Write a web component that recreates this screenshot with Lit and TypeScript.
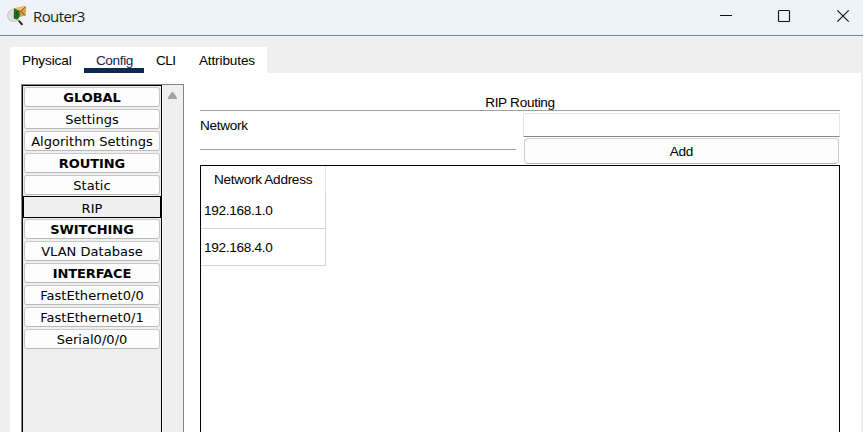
import { LitElement, html, css } from "lit";
import { customElement, property } from "lit/decorators.js";
import { classMap } from "lit/directives/class-map.js";

interface NavItem {
  label: string;
  kind?: "heading" | "selected";
}

const NAV: NavItem[] = [
  { label: "GLOBAL", kind: "heading" },
  { label: "Settings" },
  { label: "Algorithm Settings" },
  { label: "ROUTING", kind: "heading" },
  { label: "Static" },
  { label: "RIP", kind: "selected" },
  { label: "SWITCHING", kind: "heading" },
  { label: "VLAN Database" },
  { label: "INTERFACE", kind: "heading" },
  { label: "FastEthernet0/0" },
  { label: "FastEthernet0/1" },
  { label: "Serial0/0/0" },
];

@customElement("title-bar")
class TitleBar extends LitElement {
  @property() label = "";

  static styles = css`
    :host {
      display: flex;
      align-items: center;
      box-sizing: border-box;
      height: 36px;
      background: #eef3f8;
      border-bottom: 1px solid #83838f;
      color: #1b1b1b;
    }
    .logo { margin-left: 7px; width: 20px; height: 20px; margin-top: -3px; }
    .name {
      flex: 1;
      margin-left: 6px;
      margin-top: -3px;
      font: 15px/20px "Open Sans", "Noto Sans", sans-serif;
      letter-spacing: -0.6px;
    }
    .controls { width: 144px; height: 35px; }
    svg { display: block; }
  `;

  render() {
    return html`
      <svg class="logo" viewBox="0 0 20 20">
        <circle cx="6.5" cy="9.5" r="6" fill="#dde0dc" stroke="#b6bab8" stroke-width=".8" />
        <path d="M6.5 2.6 17.6 0 19 1.2 18.6 9.6 11 11.4z" fill="#d9a244" />
        <path d="M7 2.7 18 0.4 13.6 5.2z" fill="#f0c06c" />
        <path d="M6.8 2.8 13.4 5.4 18.5 0.8M13.8 5.6 18.4 9.4" fill="none" stroke="#5c4120" stroke-width=".8" />
        <path d="M7 3.2 12.2 5.4C13.4 8.4 12.8 11.4 10 13.4L6.8 12.4z" fill="#08600f" />
        <path d="M8 6h1M10.5 7h1M8.2 9h1M10.6 10h1M8.5 11.6h1" stroke="#3cb82f" stroke-width="1.1" />
        <path d="M10.5 13.6 12.4 15.4" stroke="#a4a7aa" stroke-width="1.5" />
        <path d="M12 14.8 15.4 18.8" stroke="#2a2525" stroke-width="2" />
      </svg>
      <span class="name">${this.label}</span>
      <svg class="controls" viewBox="0 0 144 35" fill="none" stroke="#111">
        <path d="M1 15.5h12" />
        <rect x="59.5" y="10.5" width="11" height="11" rx="1" stroke-width="1.15" />
        <path d="M118.3 10.3 129.7 21.7M129.7 10.3 118.3 21.7" stroke-width="1.15" />
      </svg>
    `;
  }
}

@customElement("config-nav")
class ConfigNav extends LitElement {
  static styles = css`
    :host {
      display: flex;
      box-sizing: border-box;
      width: 163px;
      background: #efefef;
      border: solid #83838b;
      border-width: 1px 1px 0;
    }
    .list {
      box-sizing: border-box;
      width: 140px;
      border: solid #000;
      border-width: 1px 1px 0;
      font: 13px/20px "DejaVu Sans", sans-serif;
      letter-spacing: 0.03px;
      color: #000;
    }
    .item {
      box-sizing: border-box;
      height: 20px;
      margin: 1px 1px 2px;
      border: 1px solid #c8c8c8;
      border-bottom-color: #b9b9b9;
      border-radius: 3px;
      background: #fdfdfd;
      text-align: center;
      white-space: nowrap;
    }
    .item + .item { margin-top: 0; }
    .heading { font-weight: bold; letter-spacing: -0.08px; }
    .item.selected {
      height: 22px;
      margin: -1px 0 1px;
      line-height: 23px;
      border-color: #000;
      border-radius: 0;
      background: #efefef;
    }
    .scroll { flex: 1; border-left: 1px solid #fafafa; }
    .scroll svg { display: block; margin: 7px 0 0 5px; }
  `;

  render() {
    return html`
      <div class="list">
        ${NAV.map(
          (n) => html`<div
            class=${classMap({ item: true, heading: n.kind === "heading", selected: n.kind === "selected" })}
          >${n.label}</div>`,
        )}
      </div>
      <div class="scroll">
        <svg width="9" height="7" viewBox="0 0 9 7">
          <path d="M3.8 0h1.4L9 5.5V7H0V5.5z" fill="#a3a3a3" />
        </svg>
      </div>
    `;
  }
}

@customElement("rip-panel")
class RipPanel extends LitElement {
  static styles = css`
    :host { display: flex; flex-direction: column; width: 640px; }
    .title {
      height: 15px;
      line-height: 15px;
      text-align: center;
      border-bottom: 1px solid #a0a0a0;
    }
    .form {
      display: grid;
      grid-template-columns: 316px 317px;
      grid-template-rows: 24px 26px;
      column-gap: 7px;
      row-gap: 1px;
      padding-top: 2px;
    }
    .label { line-height: 25px; }
    .field {
      border: 1px solid #e6e6e6;
      border-bottom-color: #868686;
      border-radius: 1px;
      background: #fff;
    }
    .rule { height: 1px; margin-top: 11px; background: #a0a0a0; }
    .add {
      box-sizing: border-box;
      margin: 0 1px;
      border: 1px solid #cdcdcd;
      border-bottom-color: #b9b9b9;
      border-radius: 4px;
      background: #fdfdfd;
      text-align: center;
      line-height: 25px;
    }
    .table {
      flex: 1;
      margin-top: 1px;
      border: solid #000;
      border-width: 1px 1px 0;
    }
    .table > div { box-sizing: border-box; width: 125px; }
    .head {
      height: 26px;
      line-height: 27px;
      text-align: center;
      border-right: 1px solid #e5e5e5;
    }
    .row {
      height: 37px;
      line-height: 37px;
      padding-left: 3px;
      border: solid #d4d4d4;
      border-width: 0 1px 1px 0;
    }
  `;

  render() {
    return html`
      <div class="title">RIP Routing</div>
      <div class="form">
        <span class="label">Network</span>
        <div class="field"></div>
        <div class="rule"></div>
        <div class="add">Add</div>
      </div>
      <div class="table">
        <div class="head">Network Address</div>
        ${["192.168.1.0", "192.168.4.0"].map((a) => html`<div class="row">${a}</div>`)}
      </div>
    `;
  }
}

@customElement("app-root")
class AppRoot extends LitElement {
  static styles = css`
    :host {
      display: flex;
      flex-direction: column;
      width: 863px;
      height: 432px;
      overflow: hidden;
      background: #efefef;
      color: #000;
      font: 13.6px/16px "Liberation Sans", Arial, sans-serif;
      letter-spacing: -0.3px;
    }
    config-nav, title-bar { letter-spacing: 0; }
    .tabs {
      display: flex;
      box-sizing: border-box;
      width: 257px;
      height: 26px;
      margin: 11px 0 0 10px;
      background: #fff;
      letter-spacing: -0.13px;
    }
    .tab {
      box-sizing: border-box;
      height: 26px;
      line-height: 27px;
      padding: 0 12px;
      white-space: nowrap;
    }
    .physical { width: 74px; }
    .config {
      width: 60px;
      border-bottom: 5px solid #10294f;
      color: #10294f;
      letter-spacing: -0.35px;
    }
    .cli { width: 43px; letter-spacing: -0.5px; }
    .body {
      flex: 1;
      display: flex;
      margin: 0 2px 0 10px;
      padding-left: 11px;
      background: #fff;
    }
    config-nav { margin-top: 11px; }
    rip-panel { margin: 22px 0 0 16px; }
  `;

  render() {
    return html`
      <title-bar label="Router3"></title-bar>
      <nav class="tabs">
        <div class="tab physical">Physical</div>
        <div class="tab config">Config</div>
        <div class="tab cli">CLI</div>
        <div class="tab">Attributes</div>
      </nav>
      <div class="body">
        <config-nav></config-nav>
        <rip-panel></rip-panel>
      </div>
    `;
  }
}
